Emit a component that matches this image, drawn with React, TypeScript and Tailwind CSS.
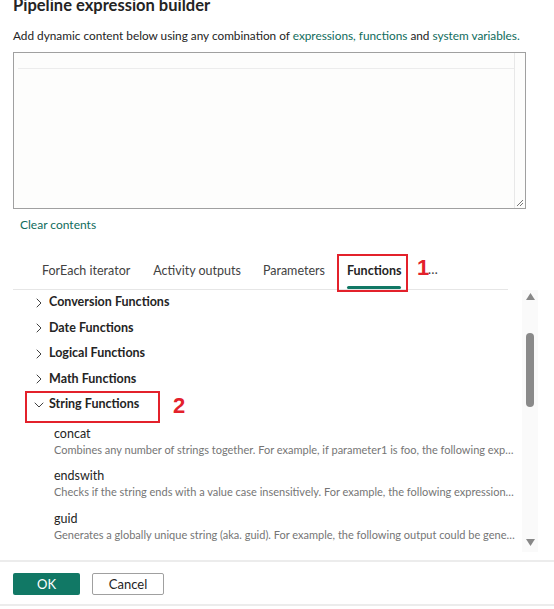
import { ChevronRight, ChevronDown } from "lucide-react";

const categories = [
  { name: "Conversion Functions", open: false },
  { name: "Date Functions", open: false },
  { name: "Logical Functions", open: false },
  { name: "Math Functions", open: false },
];

const stringFunctions = [
  {
    name: "concat",
    desc: "Combines any number of strings together. For example, if parameter1 is foo, the following expression would return foobar",
  },
  {
    name: "endswith",
    desc: "Checks if the string ends with a value case insensitively. For example, the following expression returns true",
  },
  {
    name: "guid",
    desc: "Generates a globally unique string (aka. guid). For example, the following output could be generated",
  },
];

export default function App() {
  return (
    <div className="w-[554px] h-[609px] overflow-hidden bg-white text-[#242424] font-['Lato',sans-serif] flex flex-col">
      {/* Header */}
      <div className="px-[13px]">
        <h1 className="text-[16.5px] font-bold leading-[20px] -mt-[5px]">Pipeline expression builder</h1>
        <p className="mt-[13px] text-[11.8px] leading-[16px] whitespace-nowrap">
          Add dynamic content below using any combination of{" "}
          <span className="text-[#0f6c5c]">expressions, functions</span> and{" "}
          <span className="text-[#0f6c5c]">system variables.</span>
        </p>

        {/* Editor */}
        <div className="mt-[8px] w-[513px] h-[157px] border border-[#a0a0a0] bg-[#fdfdfc] relative flex">
          <div className="flex-1 flex flex-col">
            <div className="h-[16px] ml-[4px] border-b border-[#ececec]" />
          </div>
          <div className="w-[11px] border-l border-[#e8e8e8]" />
          <svg className="absolute right-[1px] bottom-[1px]" width="8" height="8" viewBox="0 0 8 8">
            <path d="M7 1 L1 7 M7 4 L4 7" stroke="#777" strokeWidth="1" />
          </svg>
        </div>

        <div className="mt-[8px] text-[12px] leading-[16px] text-[#0f6c5c] pl-[7px]">Clear contents</div>
      </div>

      {/* Tabs */}
      <div className="mt-[29px] ml-[13px] w-[495px] border-b border-[#e6e6e6] flex items-end pl-[29px] text-[12.5px] text-[#424242]">
        <div className="pb-[8px] mr-[23px]">ForEach iterator</div>
        <div className="pb-[8px] mr-[22px]">Activity outputs</div>
        <div className="pb-[8px] mr-[22px]">Parameters</div>
        <div className="relative">
          <div className="font-bold text-[#242424] pb-[5px]">Functions</div>
          <div className="h-[3px] bg-[#117865] rounded-full" />
          <div className="absolute -left-[10px] -right-[7px] -top-[8px] -bottom-[3px] border-2 border-[#e3212b]" />
          <div className="absolute left-[70px] -top-[6px] text-[#e3212b] text-[22px] font-bold leading-[24px] font-['Liberation_Sans',sans-serif]">1</div>
          <div className="absolute left-[81px] -top-[2px] text-[13px]">…</div>
        </div>
      </div>

      {/* List with scrollbar */}
      <div className="flex ml-[13px] h-[262px]">
        <div className="flex-1 pl-[18px] overflow-hidden">
          {categories.map((c) => (
            <div key={c.name} className="h-[25.5px] flex items-center text-[12.5px] font-bold text-[#242424]">
              <ChevronRight size={16} strokeWidth={1.4} className="mr-[2px] text-[#333]" />
              {c.name}
            </div>
          ))}
          <div className="h-[26px] flex items-center text-[12.5px] font-bold relative">
            <ChevronDown size={16} strokeWidth={1.4} className="mr-[2px] text-[#333]" />
            String Functions
            <div className="absolute -left-[6px] w-[135px] top-[-1px] h-[32px] border-2 border-[#e3212b]" />
            <div className="absolute left-[142px] top-[2px] text-[#e3212b] text-[22px] font-bold leading-[24px] font-['Liberation_Sans',sans-serif]">2</div>
          </div>
          <div className="pl-[23px] pt-[5px]">
            {stringFunctions.map((f) => (
              <div key={f.name} className="h-[42.5px] pt-[2px]">
                <div className="text-[12.5px] leading-[17px] text-[#242424]">{f.name}</div>
                <div className="text-[11px] leading-[15px] text-[#757575] whitespace-nowrap overflow-hidden text-ellipsis w-[462px]">{f.desc}</div>
              </div>
            ))}
          </div>
        </div>
        <div className="w-[16px] mr-[16px] bg-[#fafafa] flex flex-col items-center pt-[3px] pb-[6px]">
          <svg width="9" height="7" viewBox="0 0 9 7"><path d="M4.5 0 L9 7 L0 7 Z" fill="#888" /></svg>
          <div className="mt-[33px] w-[8px] h-[74px] rounded-full bg-[#8a8a8a]" />
          <div className="flex-1" />
          <svg width="9" height="7" viewBox="0 0 9 7"><path d="M0 0 L9 0 L4.5 7 Z" fill="#888" /></svg>
        </div>
      </div>

      {/* Footer */}
      <div className="mt-[8px] border-t-2 border-[#ececec] h-[44px] flex items-start pt-[11px] gap-[12px] px-[13px]">
        <button className="w-[67px] h-[22px] bg-[#117865] text-white text-[13px] rounded-[2px] leading-[20px]">OK</button>
        <button className="w-[72px] h-[22px] border border-[#a0a0a0] bg-white text-[13px] rounded-[2px] leading-[20px] text-[#242424]">Cancel</button>
      </div>
      <div className="border-t-2 border-[#ececec]" />
    </div>
  );
}
